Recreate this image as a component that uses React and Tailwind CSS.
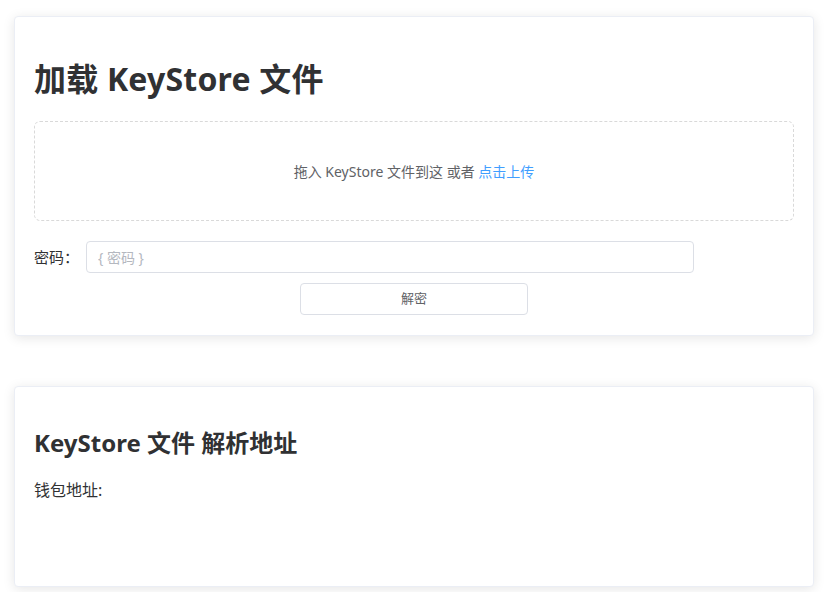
import React from "react";

const font = {
  fontFamily: '"Noto Sans", "Noto Sans CJK SC", sans-serif',
};

const App = () => {
  return (
    <div className="min-h-[592px] w-[839px] bg-white pt-[16px]" style={font}>
      {/* Load keystore card */}
      <div className="ml-[14px] w-[800px] rounded-[4px] border border-[#ebeef5] bg-white px-[19px] pb-[20px] pt-[20px] shadow-[0_2px_12px_0_rgba(0,0,0,0.1)]">
        <h1 className="mt-[22px] text-[32px] font-bold leading-[40px] tracking-[0.2px] text-[#303133]">
          加载 KeyStore 文件
        </h1>

        {/* Drop zone */}
        <div className="mt-[22px] flex h-[100px] items-center justify-center rounded-[6px] border border-dashed border-[#d9d9d9] text-[14px] text-[#606266]">
          拖入 KeyStore 文件到这 或者&nbsp;
          <span className="cursor-pointer text-[#409eff]">点击上传</span>
        </div>

        {/* Password */}
        <div className="mt-[20px] flex items-center">
          <label className="w-[52px] text-[15px] text-[#303133]">密码：</label>
          <input
            type="password"
            placeholder="{ 密码 }"
            className="h-[32px] w-[608px] rounded-[4px] border border-[#dcdfe6] px-[11px] text-[14px] text-[#606266] outline-none placeholder:text-[#b4b8bf]"
          />
        </div>

        <div className="mt-[10px] flex justify-center">
          <button className="h-[32px] w-[228px] rounded-[4px] border border-[#dcdfe6] bg-white text-[13px] text-[#606266]">
            解密
          </button>
        </div>
      </div>

      {/* Parsed address card */}
      <div className="ml-[14px] mt-[50px] h-[201px] w-[800px] rounded-[4px] border border-[#ebeef5] bg-white px-[19px] pt-[20px] shadow-[0_2px_12px_0_rgba(0,0,0,0.1)]">
        <h2 className="mt-[20px] text-[24px] font-bold leading-[32px] text-[#303133]">
          KeyStore 文件 解析地址
        </h2>
        <p className="mt-[19px] text-[16px] leading-[24px] text-[#303133]">钱包地址:</p>
      </div>
    </div>
  );
};

export default App;
